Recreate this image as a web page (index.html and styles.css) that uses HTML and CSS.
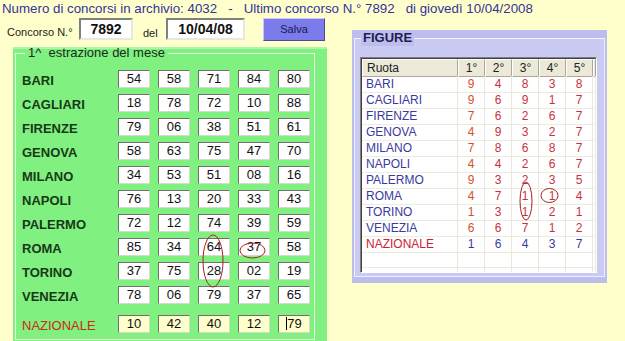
FILE: index.html
```html
<!DOCTYPE html>
<html lang="it">
<head>
<meta charset="utf-8">
<title>Estrazioni</title>
<link rel="stylesheet" href="styles.css">
</head>
<body>
<div class="title">Numero di concorsi in archivio: 4032&nbsp;&nbsp;&nbsp;-&nbsp;&nbsp;&nbsp;Ultimo concorso N.° 7892&nbsp;&nbsp;&nbsp;di giovedì 10/04/2008</div>
<div class="main">
  <div class="left">
    <div class="form">
      <span class="lbl lbl1">Concorso N.°</span>
      <div class="inp w1">7892</div>
      <span class="lbl del">del</span>
      <div class="inp w2">10/04/08</div>
      <div class="btn">Salva</div>
    </div>
    <div class="green">
      <fieldset class="estr">
        <legend>1^&nbsp; estrazione del mese</legend>
        <div class="row"><span class="ruota">BARI</span><span class="num">54</span><span class="num">58</span><span class="num">71</span><span class="num">84</span><span class="num">80</span></div>
        <div class="row"><span class="ruota">CAGLIARI</span><span class="num">18</span><span class="num">78</span><span class="num">72</span><span class="num">10</span><span class="num">88</span></div>
        <div class="row"><span class="ruota">FIRENZE</span><span class="num">79</span><span class="num">06</span><span class="num">38</span><span class="num">51</span><span class="num">61</span></div>
        <div class="row"><span class="ruota">GENOVA</span><span class="num">58</span><span class="num">63</span><span class="num">75</span><span class="num">47</span><span class="num">70</span></div>
        <div class="row"><span class="ruota">MILANO</span><span class="num">34</span><span class="num">53</span><span class="num">51</span><span class="num">08</span><span class="num">16</span></div>
        <div class="row"><span class="ruota">NAPOLI</span><span class="num">76</span><span class="num">13</span><span class="num">20</span><span class="num">33</span><span class="num">43</span></div>
        <div class="row"><span class="ruota">PALERMO</span><span class="num">72</span><span class="num">12</span><span class="num">74</span><span class="num">39</span><span class="num">59</span></div>
        <div class="row"><span class="ruota">ROMA</span><span class="num">85</span><span class="num">34</span><span class="num">64</span><span class="num">37</span><span class="num">58</span></div>
        <div class="row"><span class="ruota">TORINO</span><span class="num">37</span><span class="num">75</span><span class="num">28</span><span class="num">02</span><span class="num">19</span></div>
        <div class="row"><span class="ruota">VENEZIA</span><span class="num">78</span><span class="num">06</span><span class="num">79</span><span class="num">37</span><span class="num">65</span></div>
        <div class="row naz"><span class="ruota">NAZIONALE</span><span class="num">10</span><span class="num">42</span><span class="num">40</span><span class="num">12</span><span class="num"><span class="caret"></span>79</span></div>
      </fieldset>
    </div>
  </div>
  <div class="figure">
    <fieldset class="fig">
      <legend>FIGURE</legend>
      <div class="grid">
        <div class="tr th"><span>Ruota</span><span>1°</span><span>2°</span><span>3°</span><span>4°</span><span>5°</span><span></span></div>
        <div class="tr"><span>BARI</span><span>9</span><span>4</span><span>8</span><span>3</span><span>8</span><span></span></div>
        <div class="tr"><span>CAGLIARI</span><span>9</span><span>6</span><span>9</span><span>1</span><span>7</span><span></span></div>
        <div class="tr"><span>FIRENZE</span><span>7</span><span>6</span><span>2</span><span>6</span><span>7</span><span></span></div>
        <div class="tr"><span>GENOVA</span><span>4</span><span>9</span><span>3</span><span>2</span><span>7</span><span></span></div>
        <div class="tr"><span>MILANO</span><span>7</span><span>8</span><span>6</span><span>8</span><span>7</span><span></span></div>
        <div class="tr"><span>NAPOLI</span><span>4</span><span>4</span><span>2</span><span>6</span><span>7</span><span></span></div>
        <div class="tr"><span>PALERMO</span><span>9</span><span>3</span><span>2</span><span>3</span><span>5</span><span></span></div>
        <div class="tr"><span>ROMA</span><span>4</span><span>7</span><span>1</span><span>1</span><span>4</span><span></span></div>
        <div class="tr"><span>TORINO</span><span>1</span><span>3</span><span>1</span><span>2</span><span>1</span><span></span></div>
        <div class="tr"><span>VENEZIA</span><span>6</span><span>6</span><span>7</span><span>1</span><span>2</span><span></span></div>
        <div class="tr tnaz"><span>NAZIONALE</span><span>1</span><span>6</span><span>4</span><span>3</span><span>7</span><span></span></div>
        <div class="tr"><span></span><span></span><span></span><span></span><span></span><span></span><span></span></div>
        <div class="tr"><span></span><span></span><span></span><span></span><span></span><span></span><span></span></div>
      </div>
    </fieldset>
  </div>
</div>
<svg class="overlay" width="625" height="341" viewBox="0 0 625 341">
  <ellipse cx="213" cy="261" rx="10" ry="26" fill="none" stroke="#a82020" stroke-width="1"/>
  <ellipse cx="252.5" cy="250.5" rx="12.5" ry="7.5" fill="none" stroke="#a82020" stroke-width="1"/>
  <ellipse cx="526" cy="201" rx="6" ry="19" fill="none" stroke="#a82020" stroke-width="1"/>
  <ellipse cx="549.5" cy="195.5" rx="8.5" ry="7" fill="none" stroke="#a82020" stroke-width="1"/>
</svg>
</body>
</html>
```
FILE: styles.css
```css
html, body {
  margin: 0;
  padding: 0;
}
body {
  background: #ffffcc;
  font-family: "Liberation Sans", Arial, sans-serif;
  width: 625px;
  height: 341px;
  overflow: hidden;
  position: relative;
}
.title {
  height: 17px;
  line-height: 17px;
  padding-left: 2px;
  font-size: 13.3px;
  color: #333399;
  white-space: nowrap;
}
.main {
  display: flex;
  align-items: flex-start;
}
.left {
  flex: none;
  width: 327px;
}
.form {
  display: flex;
  align-items: center;
  height: 23px;
  margin-top: 1px;
  padding-left: 7px;
}
.lbl {
  font-size: 11px;
  color: #222;
  flex: none;
}
.lbl1 {
  width: 72px;
  padding-top: 4px;
}
.del {
  width: 23px;
  padding-left: 10px;
  padding-top: 6px;
}
.inp {
  flex: none;
  box-sizing: border-box;
  height: 22px;
  margin-top: -1px;
  background: #fff;
  border: 2px solid;
  border-color: #808080 #e8e8e0 #e8e8e0 #808080;
  font-weight: bold;
  font-size: 14px;
  line-height: 18px;
  text-align: center;
  color: #111;
}
.w1 { width: 54px; }
.w2 { width: 79px; }
.btn {
  flex: none;
  box-sizing: border-box;
  margin-left: 18px;
  width: 62px;
  height: 23px;
  background: #7b7bec;
  border: 1px solid;
  border-color: #c8c8ff #4a4a90 #4a4a90 #c8c8ff;
  font-size: 11px;
  line-height: 21px;
  text-align: center;
  color: #1a1a4a;
}
.green {
  margin-top: 6px;
  margin-left: 13px;
  width: 314px;
  height: 300px;
  box-sizing: border-box;
  padding: 0 2px;
  background: #80f080;
  border-top: 2px solid #a8f8a8;
}
.estr {
  box-sizing: border-box;
  width: 300px;
  margin: -2px 0 0 0;
  padding: 11px 0 0 6px;
  border: 1px solid #e4fbe4;
  min-width: 0;
}
.estr legend {
  font-size: 13px;
  line-height: 12px;
  padding: 0 3px;
  margin-left: 3px;
  color: #1a2a1a;
}
.row {
  display: flex;
  align-items: flex-start;
  height: 24px;
}
.row.naz {
  margin-top: 5px;
}
.ruota {
  flex: none;
  width: 96px;
  margin-top: 3px;
  font-size: 13px;
  font-weight: bold;
  line-height: 15px;
  color: #183818;
}
.naz .ruota {
  color: #cc2a10;
  font-weight: normal;
  font-size: 13px;
}
.num {
  flex: none;
  box-sizing: border-box;
  width: 32px;
  height: 18px;
  margin-right: 8px;
  background: #fff;
  border: 1px solid;
  border-color: #707070 #d8d8d0 #d8d8d0 #707070;
  font-size: 13px;
  line-height: 16px;
  text-align: center;
  color: #111;
  position: relative;
}
.naz .num {
  background: #ffffcc;
}
.caret {
  display: inline-block;
  width: 1px;
  height: 13px;
  background: #000;
  vertical-align: -2px;
}
.figure {
  flex: none;
  margin-left: 25px;
  margin-top: 13px;
  width: 255px;
  height: 253px;
  box-sizing: border-box;
  padding: 0 2px;
  background: #bebeee;
}
.fig {
  box-sizing: border-box;
  width: 251px;
  height: 247px;
  margin: 0;
  padding: 11px 0 0 5px;
  border: 1px solid #eeeeff;
  border-top-color: #f4f4ff;
  background: #cacaf3;
  min-width: 0;
}
.fig legend {
  font-size: 13px;
  font-weight: bold;
  line-height: 16px;
  padding: 0 2px;
  margin-left: 1px;
  color: #202050;
  background: #bebeee;
}
.grid {
  box-sizing: border-box;
  width: 237px;
  height: 216px;
  background: #fff;
  border: 1px solid;
  border-color: #808080 #ffffff #ffffff #808080;
  box-shadow: inset 1px 1px 0 #404040;
  overflow: hidden;
  padding: 1px 0 0 1px;
}
.tr {
  display: grid;
  grid-template-columns: 96px repeat(5, 27px) 1fr;
  height: 16px;
  font-size: 12px;
  line-height: 16px;
}
.tr span {
  box-sizing: border-box;
  border-right: 1px solid #e8e8dc;
  border-bottom: 1px solid #ececde;
  text-align: center;
  color: #c83240;
}
.tr span:nth-child(2) {
  color: #d4502a;
}
.tr span:first-child {
  text-align: left;
  padding-left: 4px;
  color: #3a3aa0;
}
.tr.tnaz span {
  color: #3a3aa0;
}
.tr.tnaz span:first-child {
  color: #cc2233;
}
.tr.th {
  height: 17px;
  line-height: 16px;
}
.tr.th span {
  background: #ece9d8;
  color: #222;
  border-left: 1px solid #ffffff;
  border-top: 1px solid #ffffff;
  border-right: 1px solid #aca899;
  border-bottom: 1px solid #aca899;
}
.overlay {
  position: absolute;
  left: 0;
  top: 0;
  pointer-events: none;
}
```
